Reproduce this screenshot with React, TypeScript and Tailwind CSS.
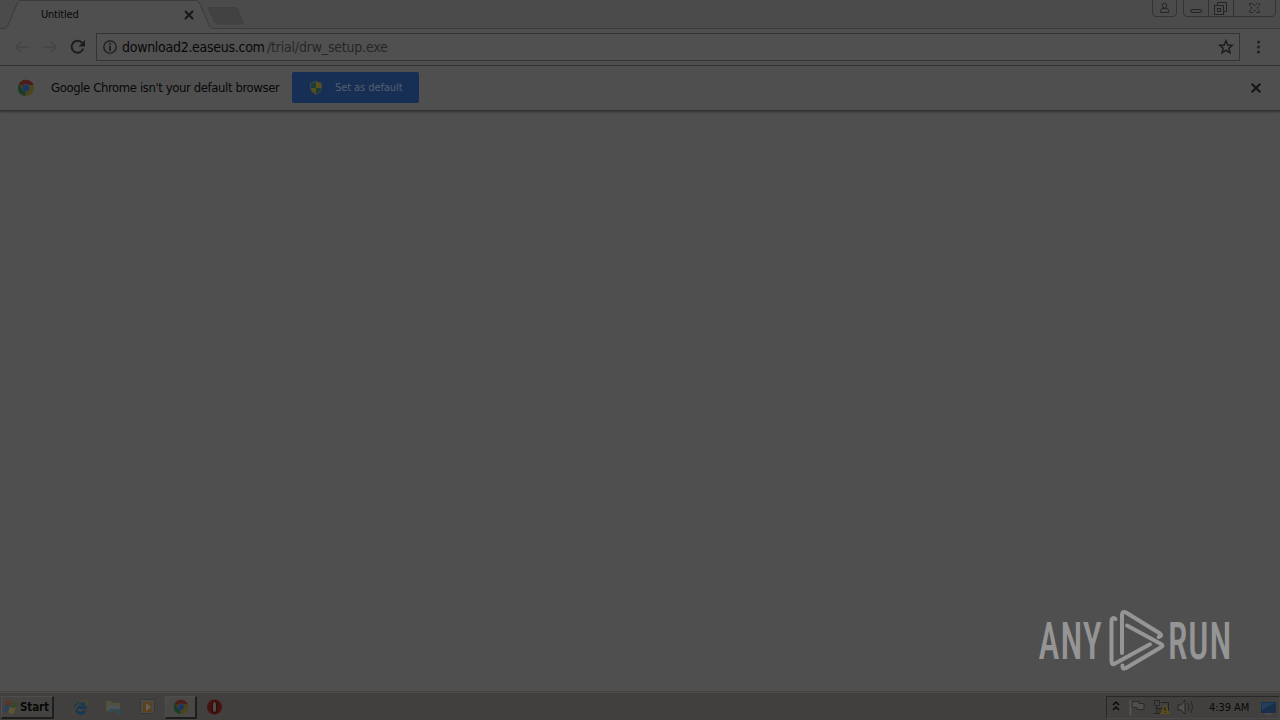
import type { ReactNode } from "react";

const ui = "font-['DejaVu_Sans_Condensed','DejaVu_Sans',sans-serif] [font-stretch:condensed]";

export default function App() {
  return (
    <div className={`flex h-[720px] w-[1280px] flex-col overflow-hidden bg-[#4f4f4f] text-[#080808] ${ui}`}>
      <TabStrip />
      <Toolbar />
      <InfoBar />
      <main className="flex flex-1 items-end justify-end pr-[40px] pb-[14px]">
        <AnyRunLogo />
      </main>
      <Taskbar />
    </div>
  );
}

function TabStrip() {
  return (
    <header className="relative flex h-[29px] shrink-0 justify-between bg-[#4b4b4b]">
      <svg className="absolute inset-0" width="1280" height="29" fill="none">
        <path d="M0 28.5H3C6 28.5 7 27 8 25L17 4C18 1 19 .5 21 .5H195C198 .5 199 2 200 4L209 25C210 27.5 211 28.5 214 28.5V29H0Z" fill="#4f4f4f" />
        <path d="M0 28.5H3C6 28.5 7 27 8 25L17 4C18 1 19 .5 21 .5H195C198 .5 199 2 200 4L209 25C210 27.5 211 28.5 214 28.5H1280" stroke="#3a3a3a" />
        <path d="M210 7.5H235C236.500 7.500 237 8 238 10L242.500 21C243.500 23 243 24 241 24H219C217 24 216 23.500 215 22L209 10C208.500 8 209 7.500 210 7.500Z" fill="#424242" stroke="#3f3f3f" />
      </svg>
      <div className="relative flex h-[29px] w-[196px] items-center justify-between pl-[41px]">
        <span className="w-[38px] text-[11px] leading-4 tracking-[-0.2px]">Untitled</span>
        <svg className="mt-px mr-[2px]" width="10" height="10" stroke="#161616" strokeWidth="1.900">
          <path d="M1 1L9 9M9 1L1 9" />
        </svg>
      </div>
      <svg className="relative" width="132" height="20" fill="none" stroke="#333">
        <path d="M4.500 0V13Q4.500 16.500 8 16.500H25Q28.500 16.500 28.500 13V0M35.500 0V13Q35.500 16.500 39 16.500H124Q127.500 16.500 127.500 13V0M60.500 0V16M85.500 0V16" />
        <g stroke="#242424">
          <circle cx="16.500" cy="5.500" r="2.300" />
          <path d="M12.500 12.500V10.500Q13 8.500 15 8.500H18Q20.500 8.500 20.500 10.500V12.500Z" />
          <rect x="42.500" y="9.500" width="11" height="3" rx="1.500" />
          <path d="M69.500 5.500V2.500H78.500V11.500H75.500" />
          <rect x="66.500" y="5.500" width="9" height="9" />
          <rect x="69.500" y="8.500" width="3" height="3" />
        </g>
        <path d="M101.500 3.500H104.500L106.500 6L108.500 3.500H111.500V5L109 8L111.500 11V12.500H108.500L106.500 10L104.500 12.500H101.500V11L104 8L101.500 5Z" stroke="#242424" strokeDasharray="3 1" />
      </svg>
    </header>
  );
}

function Toolbar() {
  return (
    <div className="flex h-[37px] shrink-0 items-center border-b border-[#353535]">
      <svg className="shrink-0" width="96" height="34" fill="none">
        <path d="M28 17H16M21.500 11.500L16 17L21.500 22.500M44 17H56M50.500 11.500L56 17L50.500 22.500" stroke="#444" strokeWidth="1.500" />
        <path d="M82.300 13A6 6 0 1 0 83.300 18.500" stroke="#1e1e1e" strokeWidth="2" />
        <path d="M85 10V16.500H78.500Z" fill="#1e1e1e" />
      </svg>
      <div className="flex h-[28px] w-[1144px] items-center border border-[#343434] bg-[#505050]">
        <svg className="ml-[6px] shrink-0" width="14" height="14" fill="none" stroke="#1b1b1b">
          <circle cx="7" cy="7" r="6.200" strokeWidth="1.300" />
          <path d="M7 6V11M7 3V4.700" strokeWidth="1.700" />
        </svg>
        <div className="ml-[5px] flex flex-1 text-[14px] leading-[18px] whitespace-nowrap">
          <span className="w-[145px] tracking-[-0.28px]">download2.easeus.com</span>
          <span className="tracking-[-0.200px] text-[#262626]">/trial/drw_setup.exe</span>
        </div>
        <svg className="mr-[5px]" width="16" height="16" fill="none" stroke="#1c1c1c" strokeWidth="1.500">
          <path d="M8 1.800L9.800 6L14.200 6.400L10.900 9.300L11.900 13.700L8 11.400L4.100 13.700L5.100 9.300L1.800 6.400L6.200 6Z" />
        </svg>
      </div>
      <svg className="ml-[16px]" width="5" height="16" fill="#202020">
        <circle cx="2.500" cy="3" r="1.500" />
        <circle cx="2.500" cy="8" r="1.500" />
        <circle cx="2.500" cy="13" r="1.500" />
      </svg>
    </div>
  );
}

function InfoBar() {
  return (
    <div className="flex h-[45px] shrink-0 items-center border-b border-[#303030] pb-px shadow-[0_1px_2px_#333]">
      <ChromeIcon className="ml-[17px]" size={18} />
      <span className="ml-[16px] w-[241px] text-[13px] whitespace-nowrap tracking-[-0.4px]">
        Google Chrome isn't your default browser
      </span>
      <button type="button" className="flex h-[31px] w-[127px] items-center rounded-[2px] bg-[#172e55] pl-[17px] text-[11px] text-[#55606f]">
        <svg width="14" height="16">
          <path d="M7 .5L13 3V7Q13 12 7 15Q1 12 1 7V3Z" fill="#3c4540" />
          <path d="M7 2L2 4V8H7Z" fill="#1d3a3c" />
          <path d="M7 2L12 4V8H7Z" fill="#5a5019" />
          <path d="M2 8H7V14Q3 12 2 8Z" fill="#545218" />
          <path d="M7 8H12Q11 12 7 14Z" fill="#1d3a35" />
        </svg>
        <span className="ml-[12px] pt-px tracking-[-0.08px] whitespace-nowrap">Set as default</span>
      </button>
      <svg className="mr-[19px] ml-auto" width="10" height="10" stroke="#141414" strokeWidth="2">
        <path d="M.7 .7L9.300 9.300M9.300 .7L.7 9.300" />
      </svg>
    </div>
  );
}

function ChromeIcon({ size, className = "" }: { size: number; className?: string }) {
  return (
    <svg className={`shrink-0 ${className}`} width={size} height={size} viewBox="0 0 18 18">
      <circle cx="9" cy="9" r="8" fill="#4d441a" />
      <path d="M9 9L2 5A8 8 0 0 1 16.500 6H9Z" fill="#4b1e1a" />
      <path d="M2 5L6 11L9 12L8 17A8 8 0 0 1 2 5Z" fill="#183c29" />
      <circle cx="9" cy="9" r="3.900" fill="#3e444b" />
      <circle cx="9" cy="9" r="3.200" fill="#1c355d" />
    </svg>
  );
}

function AnyRunLogo() {
  return (
    <svg className="overflow-visible" width="204" height="74" viewBox="0 0 204 74" fill="none" stroke="#959595" strokeWidth="4" strokeLinejoin="round" strokeLinecap="round">
      <g fill="#959595" stroke="none" fontFamily="Roboto" fontSize="51.500" fontWeight="500" letterSpacing="1.500">
        <text transform="translate(2.500 56.300) scale(.690 1)">ANY</text>
        <text transform="translate(132 56.300) scale(.690 1)">RUN</text>
      </g>
      <path d="M79.500 16Q75.500 13.500 75.500 18V58Q75.500 62.500 79 60.500L114 41.300" />
      <path d="M86 50V12Q86 7.500 90 9.500L124 30.500Q127 33 122.700 34" />
      <path d="M91 22.500L125 41Q128 42.700 125 44.300L90 65Q86 67 86.500 62.500" />
    </svg>
  );
}

function TaskButton({ children, className = "" }: { children: ReactNode; className?: string }) {
  return (
    <div className={`flex h-[23px] items-center border-t border-r-2 border-b-2 border-l border-t-[#4f4e4d] border-r-[#1f1e1e] border-b-[#1f1e1e] border-l-[#4f4e4d] ${className}`}>
      {children}
    </div>
  );
}

function Taskbar() {
  return (
    <footer className="relative flex h-[29px] shrink-0 items-center border-t border-[#454342] bg-[#42403e] pt-[2px] shadow-[inset_0_1px_#4d4b49]">
      <TaskButton className="ml-px w-[53px] bg-[#454341]">
        <svg className="ml-px shrink-0" width="17" height="17">
          <path d="M4 3Q7 1 9 3L7 8Q5 6 2 8Z" fill="#5f3422" />
          <path d="M9 4Q12 6 16 4L14 9Q11 11 7 9Z" fill="#34482c" />
          <path d="M2 8Q5 6 7 8L5 14Q3 12 0 14Z" fill="#29415d" />
          <path d="M7 9Q10 11 13 9L11 15Q8 17 5 14Z" fill="#5d552e" />
        </svg>
        <span className="pt-[2px] text-[11.500px] font-bold tracking-[-0.1px]">Start</span>
      </TaskButton>
      <svg className="ml-[18px]" width="17" height="18" fill="none">
        <path d="M13 12.500A5 5 0 1 1 13.500 9.500H5" stroke="#17384f" strokeWidth="3" />
        <path d="M3 16Q0 15 5 8Q12 0 15 3Q16 5 13 8" stroke="#4a4936" strokeWidth="1.300" />
      </svg>
      <svg className="ml-[16px]" width="17" height="18">
        <path d="M1 3H6L8 5H15V13H1Z" fill="#545138" />
        <path d="M3 7H14V12H3Z" fill="#4a5356" />
        <path d="M4 11H16V16H12V13H7V15H4Z" fill="#304b55" />
      </svg>
      <svg className="ml-[17px]" width="17" height="18">
        <path d="M1.500 1.500H15.500V15.500H1.500Z" fill="#4c4a45" stroke="#34393a" />
        <rect x="4" y="4" width="9" height="10" fill="#5d411d" />
        <path d="M7 5L12 9L7 13Z" fill="#65625b" />
      </svg>
      <TaskButton className="ml-[9px] w-[32px] justify-center bg-[#4a4846]">
        <ChromeIcon size={16} />
      </TaskButton>
      <svg className="ml-[9px]" width="17" height="18">
        <circle cx="8.500" cy="9" r="7.500" fill="#46110f" />
        <ellipse cx="8.500" cy="9" rx="2.800" ry="6" fill="#250909" />
        <ellipse cx="8.500" cy="9" rx="1.700" ry="5.200" fill="#504b49" />
      </svg>
      <div className="ml-auto flex h-[23px] w-[174px] items-center border border-t-[#292827] border-r-[#494745] border-b-[#4b4947] border-l-[#292827]">
        <svg className="ml-[5px] shrink-0" width="84" height="20" fill="none">
          <path d="M1 8L4 5L7 8M1 13L4 10L7 13" stroke="#090909" strokeWidth="1.500" />
          <path d="M18.500 3V18" stroke="#555352" strokeWidth="2" />
          <path d="M20 4.500H27V6.500H32V12.500H25V10.500H20Z" stroke="#2b2a2a" fill="#504e4c" />
          <path d="M42.500 3.500H47.500V8.500H42.500Z" stroke="#282727" />
          <path d="M49 5.500H56.500V14M45 9V16M42 16.500H49M43 11.500H51M48 12V17" stroke="#252423" />
          <path d="M53 7L58 17H48Z" fill="#5a4f18" />
          <path d="M53 10V14M53 15V16" stroke="#171515" />
          <path d="M66 8H69L73 3V17L69 13H66Z" stroke="#262524" fill="#504f4e" />
          <path d="M76 6Q78 10 76 14M79 4Q82 10 79 16" stroke="#292827" />
        </svg>
        <span className="ml-[13px] w-[42px] pt-[2px] text-[11px] whitespace-nowrap tracking-[-0.05px]">4:39 AM</span>
        <svg className="ml-[9px]" width="17" height="18">
          <rect x="1" y="4" width="15" height="11" fill="#1a304a" />
          <path d="M2 5L15 5L2 12Z" fill="#223f5e" />
          <path d="M5 16H12" stroke="#555" />
        </svg>
      </div>
    </footer>
  );
}
